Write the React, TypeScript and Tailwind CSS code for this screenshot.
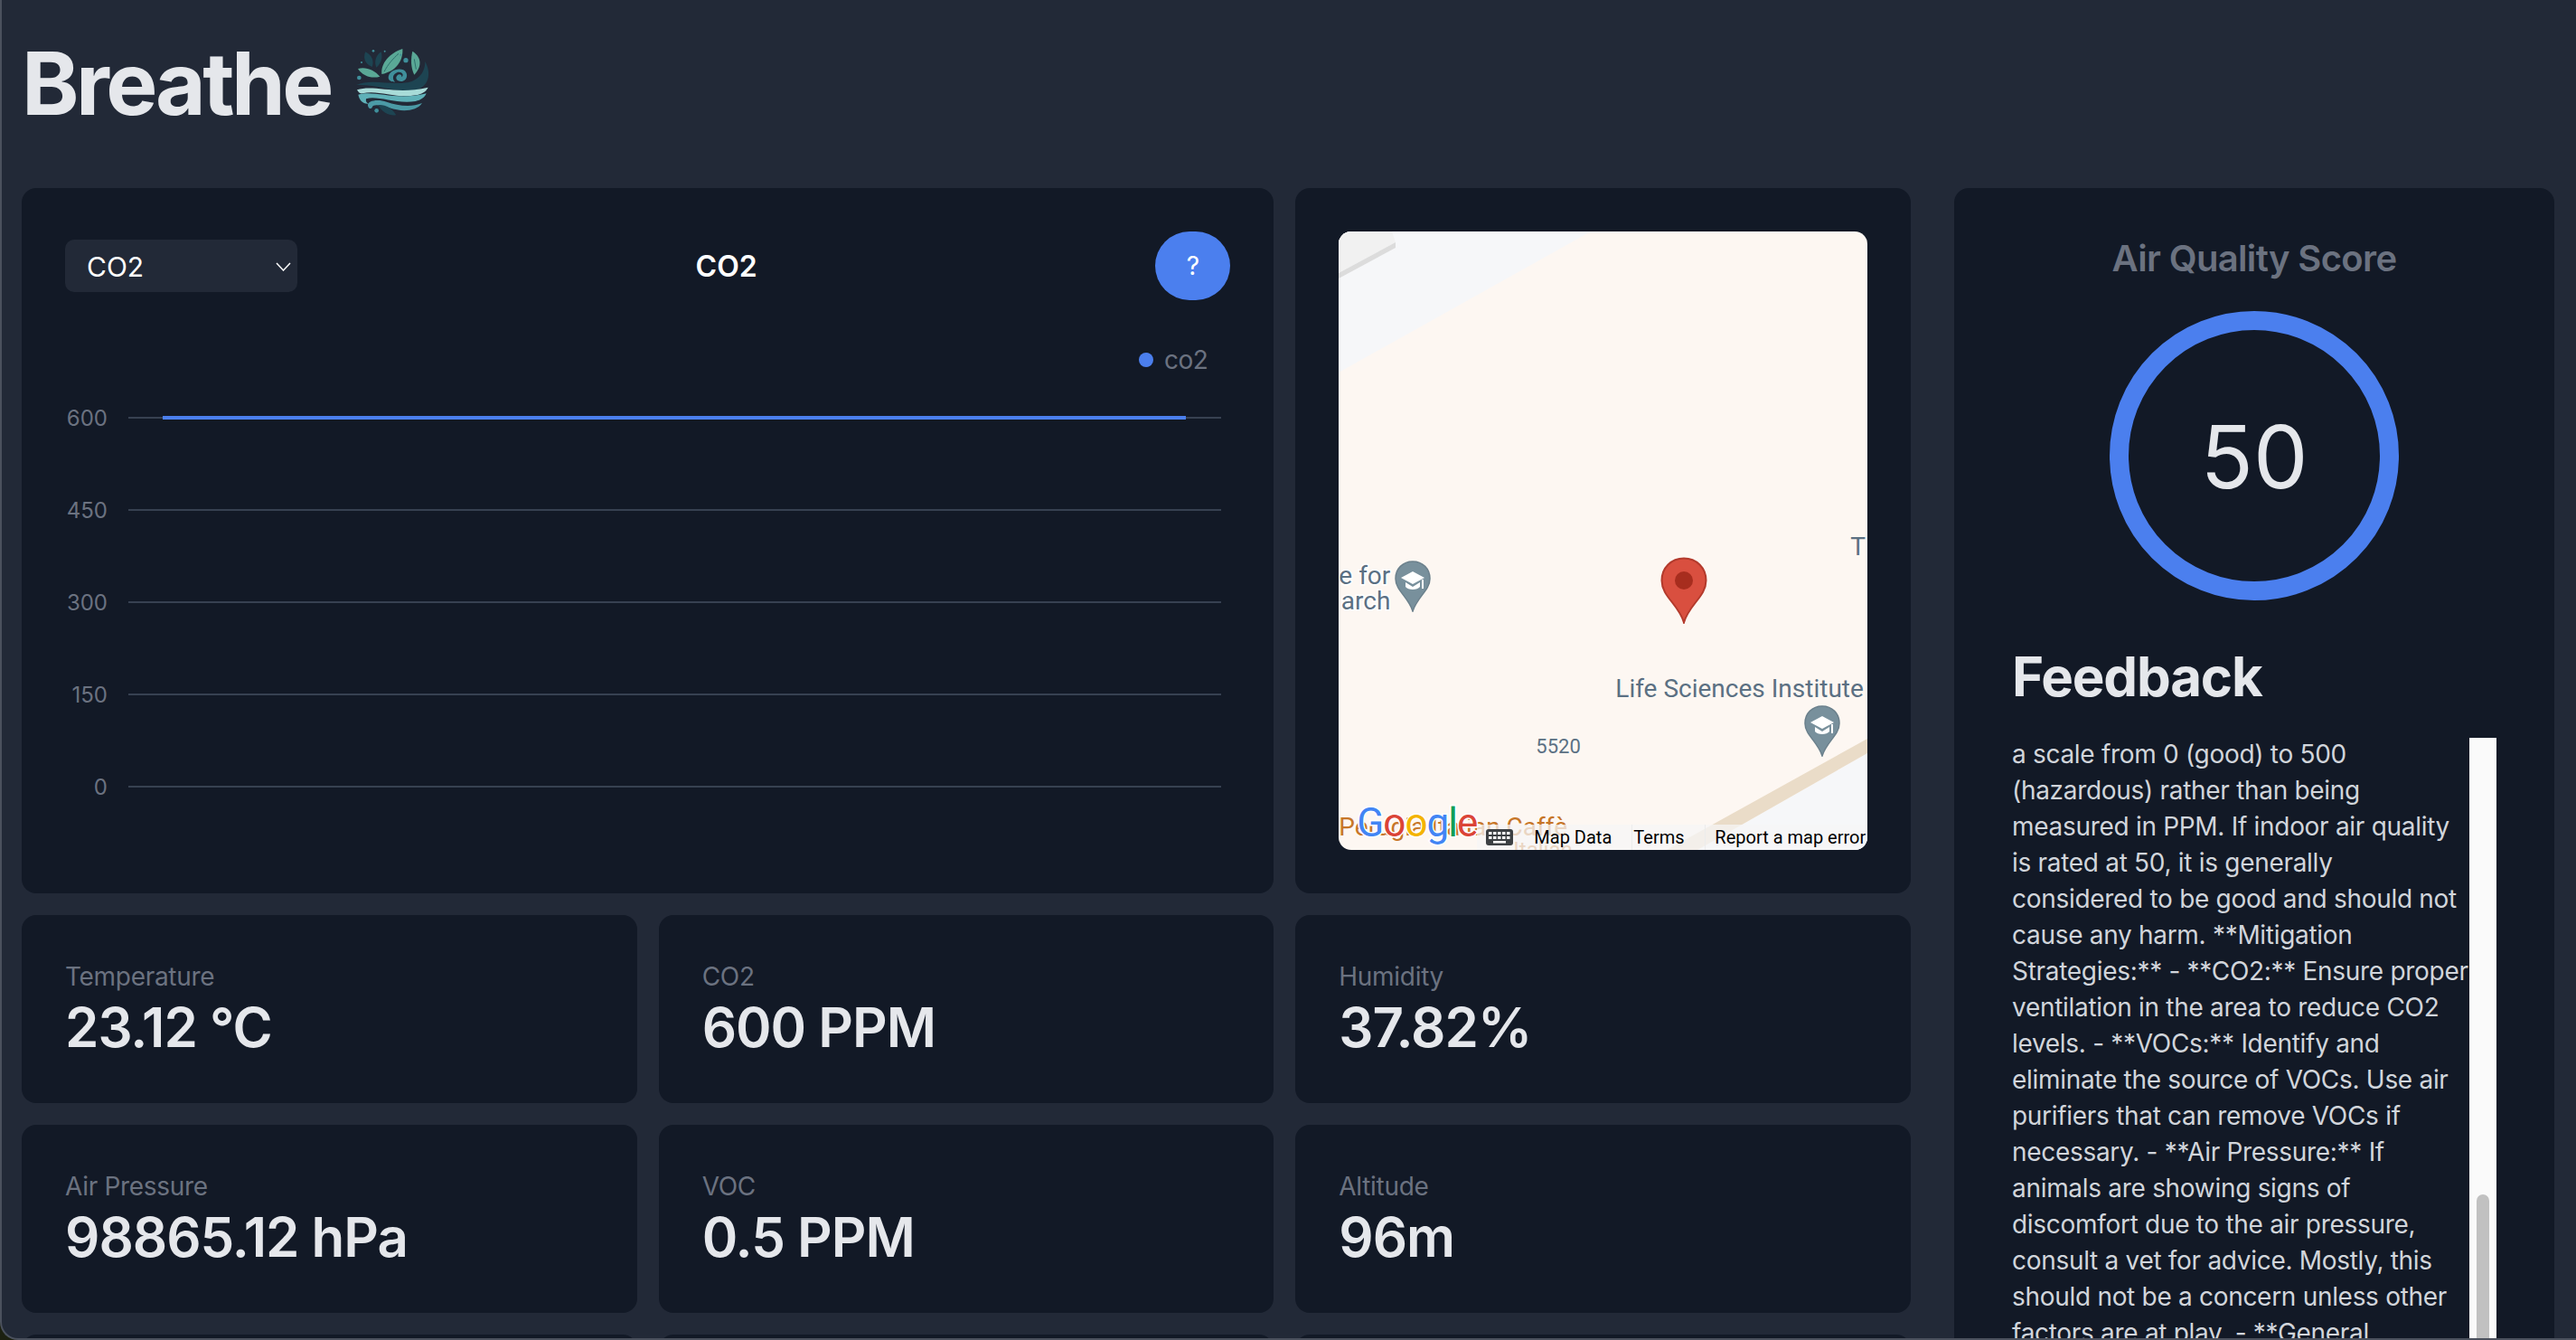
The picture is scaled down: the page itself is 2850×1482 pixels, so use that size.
import React from "react";

const stats = [
  { label: "Temperature", value: "23.12 °C" },
  { label: "CO2", value: "600 PPM" },
  { label: "Humidity", value: "37.82%" },
  { label: "Air Pressure", value: "98865.12 hPa" },
  { label: "VOC", value: "0.5 PPM" },
  { label: "Altitude", value: "96m" },
];

const feedback =
  "a scale from 0 (good) to 500 (hazardous) rather than being measured in PPM. If indoor air quality is rated at 50, it is generally considered to be good and should not cause any harm. **Mitigation Strategies:** - **CO2:** Ensure proper ventilation in the area to reduce CO2 levels. - **VOCs:** Identify and eliminate the source of VOCs. Use air purifiers that can remove VOCs if necessary. - **Air Pressure:** If animals are showing signs of discomfort due to the air pressure, consult a vet for advice. Mostly, this should not be a concern unless other factors are at play. - **General";

const Logo = () => (
  <svg viewBox="0 0 330 300" className="w-[110px] h-[100px] ml-[15px] mt-[-4px]">
    {/* leaves */}
    <path d="M92 102 C66 92 62 70 70 52 C90 62 100 82 92 102Z" fill="#1d4452" />
    <path d="M106 104 C98 84 104 64 122 52 C128 72 122 92 106 104Z" fill="#1d4452" />
    <path d="M45 108 C70 100 100 112 118 134 C90 142 60 132 45 108Z" fill="#5aa896" />
    <path d="M124 126 C120 90 150 56 193 42 C196 84 168 118 124 126Z" fill="#5aa896" />
    <path d="M132 118 C146 92 160 76 180 58" stroke="#2c6f6c" strokeWidth="3" fill="none" />
    <path d="M226 50 C252 66 262 96 232 128 C220 104 220 76 226 50Z" fill="#5aa896" />
    <path d="M232 76 L238 110" stroke="#2c6f6c" strokeWidth="3" fill="none" />
    {/* swirl */}
    <path
      d="M146 138 C146 116 176 104 196 112 C212 120 212 146 192 150 C176 152 166 140 176 130 C182 124 192 128 190 136 C200 128 190 116 176 120 C160 126 158 142 168 152 C156 152 148 148 146 138Z"
      fill="#3f8f9b"
    />
    <circle cx="204" cy="80" r="8" fill="#3f8f9b" />
    <circle cx="96" cy="49" r="4" fill="#3f8f9b" />
    <circle cx="134" cy="50" r="3" fill="#3f8f9b" />
    <circle cx="187" cy="62" r="3" fill="#3f8f9b" />
    <circle cx="57" cy="87" r="3" fill="#3f8f9b" />
    <circle cx="49" cy="138" r="7" fill="#3f8f9b" />
    {/* dark band */}
    <path
      d="M40 162 C90 138 170 168 224 150 C252 138 268 116 268 84 C290 124 280 166 240 178 C180 192 110 158 40 162Z"
      fill="#1d4452"
    />
    {/* waves */}
    <path
      d="M42 178 C100 160 170 196 278 170 C270 186 256 192 236 196 C170 208 110 176 60 190 C52 192 46 186 42 178Z"
      fill="#a8dbd8"
    />
    <path
      d="M46 194 C100 178 170 216 272 190 C266 204 254 212 236 216 C170 226 110 196 72 208 C70 216 74 222 80 224 C62 226 50 212 46 194Z"
      fill="#5fb1b8"
    />
    <path
      d="M78 230 C76 214 110 208 140 218 C176 230 220 238 258 222 C240 250 190 252 150 238 C120 228 96 224 92 236 C88 244 80 240 78 230Z"
      fill="#4b9aa6"
    />
    <circle cx="107" cy="247" r="7" fill="#3f8f9b" />
    <path d="M112 228 C136 226 160 240 172 262 C146 264 124 252 112 228Z" fill="#1d4452" />
  </svg>
);

const Chart = () => (
  <svg viewBox="0 0 1289 608" className="w-[1289px] h-[608px] block">
    <circle cx="1196" cy="66" r="8" fill="#4b7fee" />
    <text x="1216" y="76" fontSize="28" letterSpacing="-0.5" fill="#6b7280">
      co2
    </text>
    {[
      { y: 130, label: "600" },
      { y: 232, label: "450" },
      { y: 334, label: "300" },
      { y: 436, label: "150" },
      { y: 538, label: "0" },
    ].map((t) => (
      <g key={t.label}>
        <line x1="70" x2="1279" y1={t.y} y2={t.y} stroke="#374151" strokeWidth="2" />
        <text x="47" y={t.y + 9} fontSize="24" textAnchor="end" fill="#6b7280">
          {t.label}
        </text>
      </g>
    ))}
    <line x1="108" x2="1240" y1="130" y2="130" stroke="#4b7fee" strokeWidth="4" />
  </svg>
);

const Pin = ({ className }: { className: string }) => (
  <svg viewBox="0 0 40 57" className={className}>
    <path
      d="M20 1 C9 1 1 9 1 20 C1 33 15 40 20 56 C25 40 39 33 39 20 C39 9 31 1 20 1Z"
      fill="#78909c"
      stroke="#6b808c"
      strokeWidth="1.5"
    />
    <path d="M20 12 L33 19 L20 26 L7 19Z" fill="#fff" />
    <path d="M12 24 L12 29 C15 33 25 33 28 29 L28 24 L20 29Z" fill="#fff" />
    <rect x="30" y="21" width="2" height="10" fill="#fff" />
  </svg>
);

const MapPanel = () => (
  <div className="relative w-[585px] h-[684px] rounded-[14px] overflow-hidden bg-[#fdf7f2] font-[Roboto,sans-serif]">
    <svg viewBox="0 0 585 684" className="absolute inset-0 w-full h-full">
      <polygon points="0,0 279,0 0,156" fill="#f6f7f9" />
      <polygon points="0,0 59,0 63,12 0,46" fill="#f1f1f1" />
      <polygon points="0,46 63,12 63,18 0,52" fill="#dcdcdc" />
      <polygon points="585,577 585,684 397,684" fill="#f6f7f9" />
      <polygon points="585,561 585,577 397,684 363,684" fill="#eadcc8" />
    </svg>

    <div className="absolute left-[-43px] top-[367px] w-[100px] text-right text-[28px] leading-[28px] text-[#5b7083] [paint-order:stroke] [-webkit-text-stroke:3px_#fff]">
      <div className="whitespace-nowrap">e for</div>
      <div className="whitespace-nowrap">arch</div>
    </div>
    <Pin className="absolute left-[62px] top-[364px] w-[40px] h-[57px]" />

    <span className="absolute left-[566px] top-[333px] text-[28px] leading-[32px] text-[#5b7083]">T</span>

    <svg viewBox="0 0 52 74" className="absolute left-[356px] top-[360px] w-[52px] h-[74px]">
      <path
        d="M26 1.5 C12 1.5 1.5 12 1.5 26 C1.5 44 20 52 26 72.5 C32 52 50.5 44 50.5 26 C50.5 12 40 1.5 26 1.5Z"
        fill="#d94f3f"
        stroke="#b33a2c"
        strokeWidth="2"
      />
      <circle cx="26" cy="26" r="10" fill="#a72d1e" />
    </svg>

    <span className="absolute left-[306px] top-[490px] text-[28px] leading-[32px] whitespace-nowrap text-[#5b7083]">
      Life Sciences Institute
    </span>
    <Pin className="absolute left-[515px] top-[524px] w-[40px] h-[57px]" />

    <span className="absolute left-[218px] top-[558px] text-[22px] leading-[24px] text-[#5b7083]">5520</span>

    {/* business labels under the logo */}
    <span className="absolute left-0 top-[643px] text-[28px] leading-[32px] whitespace-nowrap text-[#c77628]">
      Perugia Italian Caffè
    </span>
    <span className="absolute left-[193px] top-[670px] text-[24px] leading-[28px] text-[#c77628]">Italian</span>

    {/* attribution bar */}
    <div className="absolute right-0 bottom-0 left-[153px] h-[28px] bg-[#f5f5f5]/75 flex items-center text-[20px] leading-[28px] text-black">
      <svg viewBox="0 0 30 18" className="w-[30px] h-[18px] ml-[10px]">
        <rect width="30" height="18" rx="3" fill="#3c4043" />
        {[3, 8, 13, 18, 23].map((x) => (
          <g key={x}>
            <rect x={x} y="3" width="3.5" height="3" fill="#fff" />
            <rect x={x} y="8" width="3.5" height="3" fill="#fff" />
          </g>
        ))}
        <rect x="8" y="13" width="14" height="2.5" fill="#fff" />
      </svg>
      <span className="ml-[23px] w-[109px] h-full whitespace-nowrap border-r border-[#ececec]">Map Data</span>
      <span className="w-[81px] h-full pl-[1px] whitespace-nowrap border-r border-[#ececec]">Terms</span>
      <span className="pl-[10px] whitespace-nowrap">Report a map error</span>
    </div>

    <div className="absolute left-[20px] top-[630px] text-[44px] leading-[48px] whitespace-nowrap font-[Roboto,sans-serif] tracking-[-1px] [paint-order:stroke] [-webkit-text-stroke:3px_#fff]">
      <span className="text-[#4285f4]">G</span>
      <span className="text-[#db4437]">o</span>
      <span className="text-[#f4b400]">o</span>
      <span className="text-[#4285f4]">g</span>
      <span className="text-[#0f9d58]">l</span>
      <span className="text-[#db4437]">e</span>
    </div>
  </div>
);

const App = () => {
  return (
    <div className="h-[1482px] w-[2850px] overflow-hidden bg-[#1c2010]">
      <div className="h-full overflow-hidden rounded-bl-[20px] border-l-2 border-b-2 border-[#4b515d] bg-[#222937] pl-[22px] text-[#e5e7eb] font-[Inter,sans-serif]">
        <header className="flex items-start pt-[44px] h-[208px]">
          <h1 className="text-[96px] leading-[96px] font-bold tracking-[-3.5px]">Breathe</h1>
          <Logo />
        </header>

        <div className="flex items-start">
          <div className="w-[2090px] grid grid-cols-3 gap-6">
            <section className="col-span-2 h-[780px] rounded-2xl bg-[#121926] p-12">
              <div className="flex items-center justify-between h-[76px]">
                <div className="w-[257px] h-[58px] rounded-[10px] bg-[#222937] flex items-center justify-between pl-[24px] pr-[7px] pt-[2px] text-[30px] text-white">
                  CO2
                  <svg viewBox="0 0 17 10" className="w-[17px] h-[10px]" fill="none" stroke="#fff" strokeWidth="1.5">
                    <path d="M1 1 L8.5 9 L16 1" />
                  </svg>
                </div>
                <h2 className="pt-[2px] text-[32px] font-semibold text-white">CO2</h2>
                <button className="w-[83px] h-[76px] rounded-full bg-[#4b7fee] text-[28px] text-white">?</button>
              </div>
              <Chart />
            </section>

            <section className="h-[780px] rounded-2xl bg-[#121926] p-12">
              <MapPanel />
            </section>

            {stats.map((s) => (
              <div key={s.label} className="h-[208px] rounded-2xl bg-[#121926] p-12">
                <p className="text-[28px] leading-[40px] tracking-[-0.3px] text-[#6b7280]">{s.label}</p>
                <p className="text-[60px] leading-[72px] font-semibold tracking-[-1px]">{s.value}</p>
              </div>
            ))}

            <div className="h-[208px] rounded-2xl bg-[#121926]" />
            <div className="h-[208px] rounded-2xl bg-[#121926]" />
            <div className="h-[208px] rounded-2xl bg-[#121926]" />
          </div>

          <aside className="ml-12 w-[664px] h-[1400px] rounded-2xl bg-[#121926] pt-[50px] pl-16">
            <h2 className="w-[536px] text-center text-[40px] leading-[56px] font-semibold tracking-[-0.65px] text-[#6b7280]">Air Quality Score</h2>
            <div className="mt-[30px] ml-[108px] w-[320px] h-[320px] rounded-full border-[21px] border-[#4b7fee] flex items-center justify-center pt-[2px] text-[96px]">
              50
            </div>
            <h2 className="mt-12 text-[60px] leading-[72px] font-bold tracking-[-1.2px]">Feedback</h2>
            <div className="mt-8 flex">
              <p className="w-[506px] -mt-[2px] text-[28px] leading-[40px] tracking-[-0.3px] text-[#d1d5db]">{feedback}</p>
              <div className="w-[30px] h-[700px] bg-[#fafafa] px-2">
                <div className="mt-[505px] h-[195px] rounded-t-lg bg-[#c1c1c1]" />
              </div>
            </div>
          </aside>
        </div>
      </div>
    </div>
  );
};

export default App;
